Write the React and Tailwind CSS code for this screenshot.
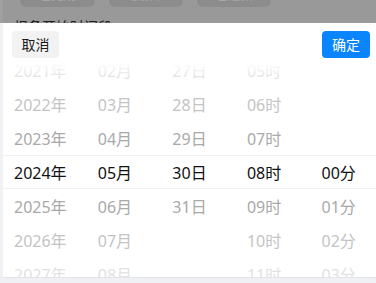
import React from "react";

const columns = [
  { items: ["2021年", "2022年", "2023年", "2024年", "2025年", "2026年", "2027年"] },
  { items: ["02月", "03月", "04月", "05月", "06月", "07月", "08月"] },
  { items: ["27日", "28日", "29日", "30日", "31日", "", ""] },
  { items: ["05时", "06时", "07时", "08时", "09时", "10时", "11时"] },
  { items: ["", "", "", "00分", "01分", "02分", "03分"] },
];

function rowColor(index) {
  const dist = Math.abs(index - 3);
  if (dist === 0) return "text-[#111111]";
  if (dist === 1) return "text-[#a9a9a9]";
  if (dist === 2) return "text-[#c4c4c4]";
  return "text-[#e2e2e2]";
}

export default function App() {
  return (
    <div
      className="w-[376px] h-[283px] bg-[#eff1f5] overflow-hidden flex flex-col"
      style={{ fontFamily: '"Noto Sans", "Noto Sans CJK SC", sans-serif' }}
    >
      {/* page behind the mask */}
      <div className="h-[23px] bg-[#999999] overflow-hidden flex flex-col border-l-[3px] border-[#a0a0a0]">
        <div className="flex gap-[14px] pl-[17px] -mt-[20px]">
          <div className="w-[75px] h-[27px] rounded-[6px] bg-[#8c8c8c] flex items-end justify-center text-[12px] text-[#a8a8a8] leading-[22px]">
            已完成
          </div>
          <div className="w-[74px] h-[27px] rounded-[6px] bg-[#8c8c8c] flex items-end justify-center text-[12px] text-[#a8a8a8] leading-[22px]">
            缴款中
          </div>
          <div className="w-[74px] h-[27px] rounded-[6px] bg-[#8c8c8c] flex items-end justify-center text-[12px] text-[#a8a8a8] leading-[22px]">
            已退款
          </div>
        </div>
        <div className="pl-[11px] mt-[12px] text-[14px] leading-[16px] text-[#1f1f1f]">
          报备开始时间段
        </div>
      </div>

      {/* popup sheet */}
      <div className="ml-[3px] h-[255px] bg-white border-b border-[#e2e4e8] flex flex-col">
        <div className="h-[40px] flex justify-between items-start pt-[8px] pl-[9px] pr-[6px]">
          <button className="w-[47px] h-[27px] rounded-[4px] bg-[#f2f2f2] text-[14px] text-[#1a1a1a]">
            取消
          </button>
          <button className="w-[48px] h-[27px] rounded-[4px] bg-[#0a84ff] text-[14px] text-white">
            确定
          </button>
        </div>

        <div className="relative h-[215px] overflow-hidden">
          <div className="absolute left-0 right-0 top-[92px] h-px bg-[#eef0f2]" />
          <div className="absolute left-0 right-0 top-[125px] h-px bg-[#eef0f2]" />
          <div className="grid grid-cols-5 -mt-[9px]">
            {columns.map((col, ci) => (
              <div key={ci} className="flex flex-col items-center">
                {col.items.map((item, ri) => (
                  <div
                    key={ri}
                    className={`h-[34px] leading-[34px] text-[16px] ${rowColor(ri)}`}
                  >
                    {item}
                  </div>
                ))}
              </div>
            ))}
          </div>
          <div className="absolute left-0 right-0 top-0 h-[14px] bg-gradient-to-b from-white to-transparent" />
        </div>
      </div>
    </div>
  );
}
